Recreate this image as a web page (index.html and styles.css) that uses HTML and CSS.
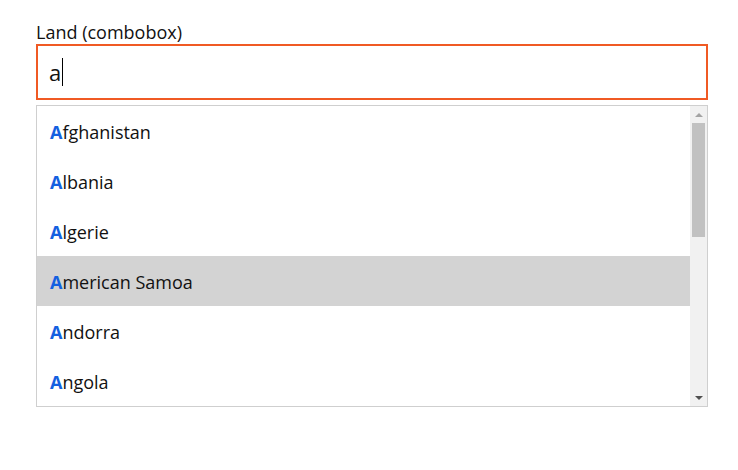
FILE: index.html
```html
<!DOCTYPE html>
<html lang="no">
<head>
<meta charset="utf-8">
<link rel="stylesheet" href="styles.css">
</head>
<body>
<div class="field">
  <label class="label" for="land">Land (combobox)</label>
  <div class="input"><span class="value">a</span><span class="caret"></span></div>
  <div class="listbox">
    <ul class="options">
      <li class="option"><b>A</b>fghanistan</li>
      <li class="option"><b>A</b>lbania</li>
      <li class="option"><b>A</b>lgerie</li>
      <li class="option active"><b>A</b>merican Samoa</li>
      <li class="option"><b>A</b>ndorra</li>
      <li class="option"><b>A</b>ngola</li>
    </ul>
    <div class="scrollbar">
      <div class="arrow up"></div>
      <div class="track"><div class="thumb"></div></div>
      <div class="arrow down"></div>
    </div>
  </div>
</div>
</body>
</html>
```
FILE: styles.css
```css
html, body { margin: 0; padding: 0; background: #fff; }
body {
  font-family: "Open Sans", "Noto Sans", sans-serif;
  color: #111;
  padding: 20px 30px 0 36px;
}
.field { display: flex; flex-direction: column; width: 672px; }
.label { font-size: 18px; line-height: 24px; height: 24px; }
.input {
  box-sizing: border-box;
  height: 56px;
  border: 2px solid #f05a24;
  display: flex;
  align-items: center;
  padding-left: 11px;
  font-size: 22px;
}
.caret { width: 1px; height: 28px; background: #000; margin-left: 1px; }
.listbox {
  margin-top: 5px;
  box-sizing: border-box;
  height: 302px;
  border: 1px solid #cfcfcf;
  display: flex;
  overflow: hidden;
}
.options { list-style: none; margin: 0; padding: 0; flex: 1; }
.option {
  height: 50px;
  display: flex;
  align-items: center;
  padding-left: 13px;
  font-size: 18px;
  padding-top: 1px;
  box-sizing: border-box;
}
.option b { color: #1460e0; font-weight: 700; }
.option.active { background: #d3d3d3; }
.scrollbar {
  width: 17px;
  background: #f1f1f1;
  display: flex;
  flex-direction: column;
}
.arrow { height: 17px; display: flex; align-items: center; justify-content: center; }
.arrow.up::before {
  content: ""; border-left: 4px solid transparent; border-right: 4px solid transparent;
  border-bottom: 4px solid #a3a3a3;
}
.arrow.down::before {
  content: ""; border-left: 4px solid transparent; border-right: 4px solid transparent;
  border-top: 4px solid #505050;
}
.track { flex: 1; padding: 0 2px; }
.thumb { height: 114px; background: #c1c1c1; }
```
